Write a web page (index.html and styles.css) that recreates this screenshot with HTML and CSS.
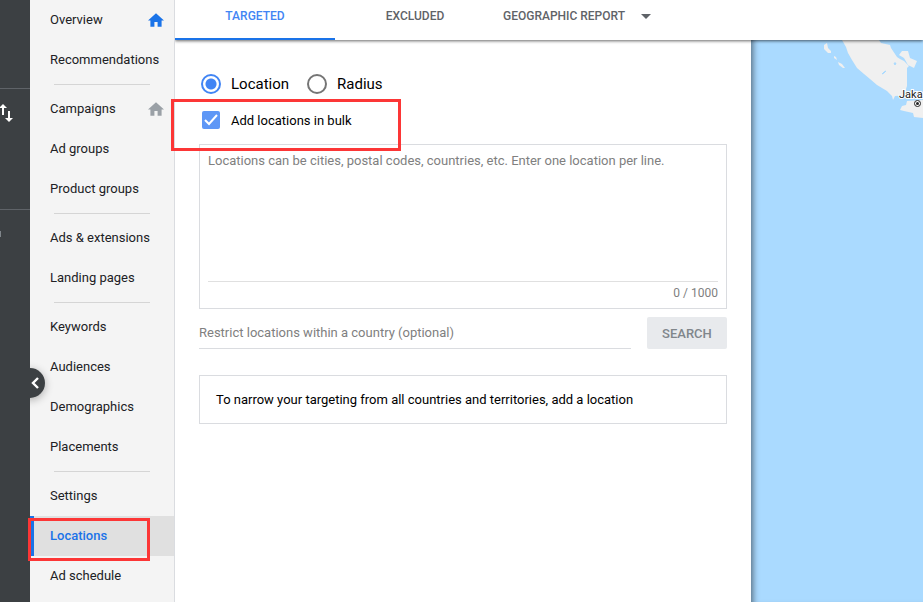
FILE: index.html
```html
<!DOCTYPE html>
<html lang="en">
<head>
    <meta charset="UTF-8">
    <meta name="viewport" content="width=device-width, initial-scale=1.0">
    <title>Locations</title>
    <link rel="stylesheet" href="styles.css">
</head>
<body>
    <div class="app">
        <aside class="rail">
            <div class="rail-section rail-top"></div>
            <div class="rail-section">
                <svg class="rail-arrows" width="14" height="20" viewBox="0 0 14 20" fill="#fff">
                    <path d="M-1 4 L3 0 L7 4 H4 V11 H2 V4 Z"/>
                    <path d="M8 7 H10 V14 H13 L9 18 L5 14 H8 Z"/>
                </svg>
            </div>
            <div class="rail-mark"></div>
            <button type="button" class="collapse" aria-label="Collapse menu">
                <svg width="8" height="12" viewBox="0 0 8 12" fill="none" stroke="#fff" stroke-width="2.4">
                    <path d="M7 1 L2 6 L7 11"/>
                </svg>
            </button>
        </aside>

        <nav class="sidebar">
            <a href="#" class="nav-item">Overview
                <svg class="home home-blue" width="16" height="14" viewBox="2 3 20 17"><path d="M10 20v-6h4v6h5v-8h3L12 3 2 12h3v8z"/></svg>
            </a>
            <a href="#" class="nav-item">Recommendations</a>
            <hr>
            <a href="#" class="nav-item">Campaigns
                <svg class="home" width="16" height="14" viewBox="2 3 20 17"><path d="M10 20v-6h4v6h5v-8h3L12 3 2 12h3v8z"/></svg>
            </a>
            <a href="#" class="nav-item">Ad groups</a>
            <a href="#" class="nav-item">Product groups</a>
            <hr>
            <a href="#" class="nav-item">Ads &amp; extensions</a>
            <a href="#" class="nav-item">Landing pages</a>
            <hr>
            <a href="#" class="nav-item">Keywords</a>
            <a href="#" class="nav-item">Audiences</a>
            <a href="#" class="nav-item">Demographics</a>
            <a href="#" class="nav-item">Placements</a>
            <hr>
            <a href="#" class="nav-item">Settings</a>
            <a href="#" class="nav-item active">Locations<span class="highlight highlight-nav"></span></a>
            <a href="#" class="nav-item">Ad schedule</a>
        </nav>

        <main class="main">
            <div class="tabs">
                <button type="button" class="tab selected">TARGETED</button>
                <button type="button" class="tab">EXCLUDED</button>
                <button type="button" class="tab">GEOGRAPHIC REPORT
                    <svg width="10" height="5" viewBox="0 0 10 5"><path d="M0 0 H10 L5 5 Z" fill="#5f6368"/></svg>
                </button>
            </div>

            <div class="content">
                <form class="panel">
                    <div class="radios">
                        <label class="radio"><input type="radio" name="mode" checked>Location</label>
                        <label class="radio"><input type="radio" name="mode">Radius</label>
                    </div>
                    <div class="bulk">
                        <label class="check">
                            <span class="check-box">
                                <input type="checkbox" checked>
                                <svg width="18" height="18" viewBox="0 0 18 18" fill="none" stroke="#fff" stroke-width="2"><path d="M3 9 L7 13 L15 4"/></svg>
                            </span>
                            Add locations in bulk
                        </label>
                        <span class="highlight highlight-bulk"></span>
                    </div>

                    <div class="bulk-input">
                        <textarea aria-label="Locations" placeholder="Locations can be cities, postal codes, countries, etc. Enter one location per line."></textarea>
                        <div class="counter">0 / 1000</div>
                    </div>

                    <div class="search-row">
                        <input type="text" class="country" aria-label="Country" placeholder="Restrict locations within a country (optional)">
                        <button type="button" class="search" disabled>SEARCH</button>
                    </div>

                    <p class="notice">To narrow your targeting from all countries and territories, add a location</p>
                </form>

                <div class="map">
                    <svg width="172" height="90" viewBox="0 0 172 90">
                        <g fill="#f0f0f0">
                            <path d="M91 0 L95 7 L97 13 L101 20 L106 28 L113 34 L119 39 L126 45 L136 51 L141 56 L142 60 L144 56 L156 55 L155 49 L156 46 V28 L158 26 L153 21 L149 19 L146 17 L140 8 L139 5 L130 3 L128 0 Z"/>
                            <path d="M156 61 L172 60 V78 L163 77 L162 73 L153 71 L149 70 L151 66 L155 65 Z"/>
                            <path d="M73 5 L76 3 L77 8 L80 11 L80 13 L77 13 L73 9 Z"/>
                            <path d="M83 16 L85 17 L86 20 L83 18 Z M87 22 L91 24 L94 28 L92 28 L88 25 Z"/>
                            <path d="M151 11 H157 L159 18 L166 21 L163 28 L157 25 L153 18 L148 15 Z"/>
                        </g>
                        <path d="M131 34 L133 32 L135 31 L133 33 Z M143 23 L145 23 L144 25 Z" fill="#aadaff" stroke="#aadaff"/>
                        <circle cx="166.500" cy="63.500" r="3" fill="#fff" stroke="#222"/>
                        <circle cx="166.500" cy="63.500" r="1.500" fill="#222"/>
                        <text class="city" x="148" y="58">Jaka</text>
                    </svg>
                </div>
            </div>
        </main>
    </div>
</body>
</html>
```
FILE: styles.css
```css
* {
    box-sizing: border-box;
}

body {
    margin: 0;
    font-family: Roboto, Arial, sans-serif;
    font-size: 13px;
    color: #202124;
    background-color: #fff;
    overflow: hidden;
}

button, input, textarea {
    font-family: inherit;
    font-size: 13px;
}

.app {
    display: flex;
    height: 100vh;
}

.rail {
    position: relative;
    z-index: 2;
    flex: 0 0 30px;
    background-color: #3c4043;
}

.rail-section {
    height: 121px;
    padding-top: 15px;
    border-bottom: 1px solid #5f6368;
}

.rail-top {
    height: 89px;
}

.rail-arrows {
    display: block;
}

.rail-mark {
    width: 1px;
    height: 6px;
    margin-top: 21px;
    background-color: #80868b;
}

.collapse {
    position: absolute;
    top: 368px;
    left: 15px;
    width: 30px;
    height: 30px;
    padding: 0 0 0 10px;
    border: none;
    border-radius: 50%;
    background-color: #3c4043;
    box-shadow: 0 2px 8px rgba(0,0,0,0.3);
    clip-path: inset(-12px -12px -12px 15px);
}

.collapse svg {
    display: block;
    margin: 0 auto;
}

.sidebar {
    flex: 0 0 145px;
    border-right: 1px solid #dadce0;
    background-color: #f4f4f4;
}

.sidebar hr {
    height: 1px;
    margin: 4px 24px;
    border: none;
    background-color: #d5d5d5;
}

.nav-item {
    position: relative;
    display: flex;
    align-items: center;
    justify-content: space-between;
    height: 40px;
    padding: 0 10px 2px 20px;
    color: #202124;
    text-decoration: none;
    white-space: nowrap;
}

.nav-item.active {
    z-index: 3;
    padding-left: 16px;
    border-left: 4px solid #1a73e8;
    background-color: #e0e0e0;
    color: #1a73e8;
    font-weight: 500;
}

.home {
    margin-top: 2px;
    fill: #9aa0a6;
}

.home-blue {
    fill: #1a73e8;
}

/* Red callout frames */
.highlight {
    position: absolute;
    z-index: 2;
    border: 3px solid #fc3636;
    pointer-events: none;
}

.highlight-nav {
    top: 2px;
    left: -6px;
    width: 122px;
    height: 43px;
}

.highlight-bulk {
    top: -5px;
    left: -28px;
    width: 230px;
    height: 52px;
}

.main {
    flex: 1;
    min-width: 0;
    display: flex;
    flex-direction: column;
}

.tabs {
    position: relative;
    z-index: 1;
    display: flex;
    height: 40px;
    background-color: #fff;
    box-shadow: 0 1px 3px rgba(0,0,0,0.6);
    clip-path: inset(0 0 -6px 0);
}

.tab {
    display: flex;
    align-items: center;
    gap: 16px;
    min-width: 160px;
    justify-content: center;
    padding: 0 8px 6px;
    border: none;
    border-bottom: 2px solid transparent;
    background: none;
    color: #5f6368;
    font-size: 12px;
    font-weight: 500;
}

.tab.selected {
    border-bottom-color: #1a73e8;
    color: #4285f4;
}

.content {
    flex: 1;
    display: flex;
}

.panel {
    position: relative;
    flex: 0 0 77%;
    padding: 34px 24px 24px;
    background-color: #fff;
}

.radios {
    display: flex;
    gap: 18px;
    padding-left: 2px;
    font-size: 15px;
    color: #000;
}

.radio {
    display: flex;
    align-items: center;
    gap: 10px;
    height: 20px;
}

.radio input {
    appearance: none;
    width: 20px;
    height: 20px;
    margin: 0;
    border: 2px solid #757575;
    border-radius: 50%;
}

.radio input:checked {
    border-color: #4285f4;
    background: radial-gradient(circle, #4285f4 5px, #fff 6px);
}

.bulk {
    position: relative;
    margin-top: 10px;
    padding: 7px 3px 15px;
}

.check {
    display: flex;
    align-items: center;
    gap: 11px;
    height: 18px;
    color: #000;
}

.check-box {
    position: relative;
    width: 18px;
    height: 18px;
}

.check-box input {
    appearance: none;
    display: block;
    width: 18px;
    height: 18px;
    margin: 0;
    border-radius: 2px;
    background-color: #5e97f6;
}

.check-box svg {
    position: absolute;
    top: 0;
    left: 0;
}

.bulk-input {
    padding: 0 8px 7px;
    border: 1px solid #dadce0;
}

.bulk-input textarea {
    display: block;
    width: 100%;
    height: 137px;
    padding: 8px 0;
    border: none;
    border-bottom: 1px solid #e0e0e0;
    outline: none;
    resize: none;
}

::placeholder {
    color: #808080;
}

.counter {
    padding-top: 4px;
    font-size: 12px;
    line-height: 15px;
    text-align: right;
    color: #808080;
}

.search-row {
    display: flex;
    gap: 16px;
    margin-top: 8px;
}

.country {
    flex: 1;
    height: 32px;
    padding: 0;
    border: none;
    border-bottom: 1px solid #dadce0;
    outline: none;
}

.search {
    width: 80px;
    height: 32px;
    border: none;
    border-radius: 2px;
    background-color: #e8eaed;
    color: #80868b;
    font-weight: 500;
}

.notice {
    margin: 26px 0 0;
    padding: 16px;
    border: 1px solid #dadce0;
    line-height: 15px;
    color: #000;
}

.map {
    flex: 1;
    min-width: 0;
    overflow: hidden;
    background-color: #aadaff;
    box-shadow: inset 7px 0 6px -5px rgba(0,0,0,0.5);
}

.map svg {
    display: block;
}

.city {
    font-size: 11px;
    fill: #222;
    stroke: #fff;
    stroke-width: 2px;
    paint-order: stroke;
}
```
